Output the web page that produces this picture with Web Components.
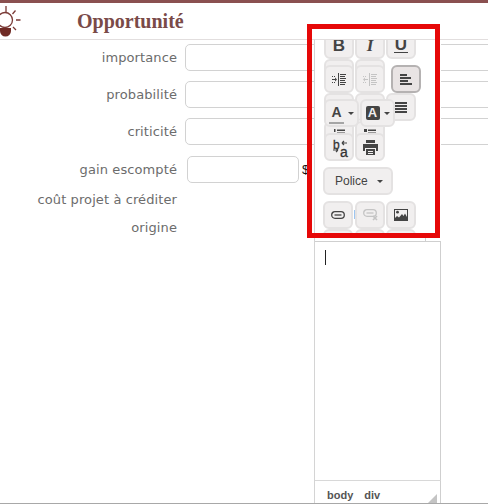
<!DOCTYPE html>
<html><head><meta charset="utf-8"><style>
html,body{margin:0;padding:0;background:#fff;overflow:hidden}
body{width:488px;height:504px;position:relative;font-family:"DejaVu Sans",sans-serif}
</style></head><body>
<form-page></form-page>
<script>
const ICONS={
 indent:'<svg width="14" height="13" viewBox="0 0 14 13"><path fill="currentColor" d="M6 0h1v13H6zM8 1h6v1H8zM8 3h5v1H8zM8 5h6v1H8zM8 7h5v1H8zM8 9h6v1H8zM8 11h5v1H8zM0 6h3V4.500l2 2-2 2V7H0zM0 3h1v1H0zM2 3h1v1H2zM0 9h1v1H0zM2 9h1v1H2z"/></svg>',
 outdent:'<svg width="14" height="13" viewBox="0 0 14 13"><path fill="currentColor" d="M6 0h1v13H6zM8 1h6v1H8zM8 3h5v1H8zM8 5h6v1H8zM8 7h5v1H8zM8 9h6v1H8zM8 11h5v1H8zM5 6H2V4.500l-2 2 2 2V7h3zM0 3h1v1H0zM2 3h1v1H2zM0 9h1v1H0zM2 9h1v1H2z"/></svg>',
 left:'<svg width="12" height="11" viewBox="0 0 12 11"><path fill="currentColor" d="M0 0h7v2H0zM0 3h11v2H0zM0 6h8v2H0zM0 9h12v2H0z"/></svg>',
 just:'<svg width="12" height="11" viewBox="0 0 12 11"><path fill="currentColor" d="M0 0h12v2H0zM0 3h12v2H0zM0 6h12v2H0zM0 9h12v2H0z"/></svg>',
 ul:'<svg width="12" height="12" viewBox="0 0 12 12"><path fill="currentColor" d="M0 0h3v3H0zM4 0.500h8v1.500H4zM4 3.500h8v1.500H4z"/></svg>',
 ol:'<svg width="12" height="12" viewBox="0 0 12 12"><path fill="currentColor" d="M1 0h1.500v3H1zM4 0.500h8v1.500H4zM4 3.500h8v1.500H4z"/></svg>',
 print:'<svg width="15" height="15" viewBox="0 0 15 15"><path fill="currentColor" fill-rule="evenodd" d="M3 0h9v3H3zM0 4h15v7h-2V8H2v3H0zM3 9h9v6H3zM5 11v1h5v-1zM5 13v1h5v-1z"/></svg>',
 link:'<svg width="14" height="8" viewBox="0 0 14 8"><g fill="none" stroke="currentColor" stroke-width="1.300"><rect x=".7" y=".7" width="12.600" height="6.600" rx="3.300"/><path d="M3.500 4h7"/></g></svg>',
 unlink:'<svg width="15" height="12" viewBox="0 0 15 12"><g fill="none" stroke="currentColor" stroke-width="1.300"><rect x=".7" y=".7" width="12.600" height="6.600" rx="3.300"/><path d="M3.500 4h7"/><path stroke-width="1.600" d="M10 7l4 4M14 7l-4 4"/></g></svg>',
 image:'<svg width="14" height="12" viewBox="0 0 14 12"><path fill="currentColor" fill-rule="evenodd" d="M0 0h14v12H0zM1 1v10h12V1z"/><circle cx="3.500" cy="3.200" r="1.400" fill="currentColor"/><path fill="currentColor" d="M1 11V9l2-2 2 1.500L8 5l1.500 2L11 4.500 13 8v3z"/></svg>'
};
customElements.define('tb-btn',class extends HTMLElement{
 connectedCallback(){
  const s=this.shadowRoot||this.attachShadow({mode:'open'});
  const ic=this.getAttribute('icon');
  s.innerHTML=`<style>
  :host{display:flex;align-items:center;justify-content:center;box-sizing:border-box;width:30px;height:28px;flex:none;
   background:#f1efef;border:2px solid #e4e2e2;border-radius:6px;color:#444;position:relative}
  :host([w="34"]){width:35px}
  :host([w="70"]){width:70px;justify-content:flex-start;padding-left:10px}
  :host([active]){background:#e9e4e4;border-color:#b5b2b2;width:30px}
  :host([off]){color:#c4c4c4}
  :host([dy="top"]){align-items:flex-start;padding-top:6px}
  :host([dy="bot"]){align-items:flex-end;padding-bottom:3px}
  slot{display:contents}
  </style>${ic?ICONS[ic]:''}<slot></slot>`;
 }
});
customElements.define('tool-bar',class extends HTMLElement{
 constructor(){super();const s=this.attachShadow({mode:'open'});s.innerHTML=`<style>
 :host{display:block;height:198px;overflow:hidden;background:#fff;box-sizing:border-box}
 .w{display:flex;flex-direction:column;margin-top:-9px;padding-left:9px}
 .r{display:flex;gap:1px;position:relative}
 .top{z-index:2}.mid{z-index:1}
 .gl{font:bold 17px "Liberation Sans",sans-serif;color:#444;line-height:1}
 .car{display:inline-block;width:0;height:0;border:3px solid transparent;border-top:3.500px solid #444;border-bottom:0;margin-left:4px}
 .sw{font:12px "Liberation Sans",sans-serif;color:#333;position:absolute;line-height:1;-webkit-text-stroke:.3px #333}
 .ca{font:bold 14px/13px "Liberation Sans",sans-serif;color:#444;border-bottom:2px solid #a5a5a5;padding:0 2px 3px;margin-top:3px}
 .cb{display:flex;align-items:center;justify-content:center;width:14px;height:14px;border-radius:2px;background:#444;color:#f1efef;font:bold 13px/14px "Liberation Sans",sans-serif}
 svg.arr{position:absolute;left:0;top:0}
 </style><div class="w">
 <div class="r"><tb-btn dy="bot"><span class="gl">B</span></tb-btn><tb-btn dy="bot"><span class="gl" style="font:italic bold 17px/17px 'Liberation Serif',serif">I</span></tb-btn><tb-btn dy="bot"><span class="gl" style="border-bottom:1px solid #444;padding:0 1px;margin-bottom:1px;line-height:15px;height:15px">U</span></tb-btn></div>
 <div class="r"><tb-btn></tb-btn><tb-btn></tb-btn></div>
 <div class="r mid" style="margin-top:-22px"><tb-btn icon="indent"></tb-btn><tb-btn icon="outdent" off></tb-btn><tb-btn icon="left" active style="margin-left:5px"></tb-btn></div>
 <div class="r"><tb-btn></tb-btn><tb-btn></tb-btn><tb-btn icon="just"></tb-btn></div>
 <div class="r top" style="margin-top:-22px"><tb-btn w="34"><span class="ca">A</span><span class="car" style="margin-left:4px"></span></tb-btn><tb-btn w="34"><span class="cb">A</span><span class="car"></span></tb-btn></div>
 <div class="r" style="margin-top:-6px"><tb-btn icon="ol" dy="top"></tb-btn><tb-btn icon="ul" dy="top"></tb-btn></div>
 <div class="r mid" style="margin-top:-16px"><tb-btn><span class="sw" style="left:7px;top:4px">b</span><span class="sw" style="left:14px;top:10px;font-size:14px">a</span><svg class="arr" width="26" height="24" viewBox="0 0 26 24"><path fill="none" stroke="#444" stroke-width="1.200" d="M16 8h5M16 8l2-2M16 8l2 2M7 15h5M12 15l-2-2M12 15l-2 2"/></svg></tb-btn><tb-btn icon="print"></tb-btn></div>
 <div class="r" style="margin-top:6px;margin-left:-1px"><tb-btn w="70"><span style="font:12px 'Liberation Sans',sans-serif;color:#444">Police</span><span class="car" style="margin-left:9px"></span></tb-btn></div>
 <div class="r" style="margin-top:6px;margin-left:-1px"><tb-btn icon="link"></tb-btn><tb-btn icon="unlink" off style="margin-left:1px"></tb-btn><tb-btn icon="image"></tb-btn><i style="position:absolute;left:31px;top:9px;width:1px;height:9px;background:#9cc5f0"></i></div>
 <div class="r" style="margin-left:-1px"><tb-btn></tb-btn><tb-btn style="margin-left:1px"></tb-btn><tb-btn></tb-btn></div>
 </div>`;}
});
customElements.define('rich-editor',class extends HTMLElement{
 constructor(){super();const s=this.attachShadow({mode:'open'});s.innerHTML=`<style>
 :host{display:flex;flex-direction:column;position:absolute;left:314px;top:39px;width:127px;height:465px;box-sizing:border-box;background:#fff;border-left:1px solid #d4d4d4;border-top:1px solid #e2dede}
 .tick{height:3px;width:110px;border-right:1px solid #cfcfcf;flex:none}
 .ed{height:240px;border-top:1px solid #cfcfcf;border-right:1px solid #cfcfcf;border-bottom:1px solid #d8d8d8;padding:8px 0 0 10px;box-sizing:border-box;flex:none}
 .ed i{display:block;width:1px;height:15px;background:#222}
 .st{flex:1;display:flex;gap:11px;border-right:1px solid #cfcfcf;padding:8px 0 0 12px;font:bold 11px "Liberation Sans",sans-serif;color:#555;position:relative}
 .grip{position:absolute;right:3px;bottom:0;width:0;height:0;border-left:10px solid transparent;border-bottom:10px solid #c4c4c4}
 </style><tool-bar></tool-bar><div class="tick"></div><div class="ed"><i></i></div><div class="st"><span>body</span><span>div</span><b class="grip"></b></div>`;}
});
customElements.define('form-row',class extends HTMLElement{
 constructor(){super();const s=this.attachShadow({mode:'open'});s.innerHTML=`<style>
 :host{display:flex;align-items:center;height:var(--h,27px);margin-top:var(--mt,10px)}
 label{width:177px;text-align:right;flex:none;font-size:13px;color:#6c6c6c;letter-spacing:.1px}
 .f{flex:1;display:flex;align-items:center;margin-left:8px;min-width:0}
 </style><label><slot name="label"></slot></label><div class="f"><slot></slot></div>`;}
});
customElements.define('text-box',class extends HTMLElement{
 constructor(){super();const s=this.attachShadow({mode:'open'});s.innerHTML=`<style>
 :host{display:block;height:27px;box-sizing:border-box;border:1px solid #d2d2d2;border-radius:5px;background:#fff;width:var(--w,320px);flex:none}
 </style>`;}
});
customElements.define('form-page',class extends HTMLElement{
 constructor(){super();const s=this.attachShadow({mode:'open'});s.innerHTML=`<style>
 :host{display:block;width:488px;height:504px;position:relative;overflow:hidden;box-sizing:border-box;border-bottom:1px solid #a8a8a8}
 .bar{height:3px;background:#8a5050}
 header{height:37px;box-sizing:border-box;border-bottom:1px solid #e2dede;display:flex;align-items:center;position:relative}
 h1{margin:0 0 0 77px;font:bold 20px "Liberation Serif",serif;color:#7a4a48}
 svg.bulb{position:absolute;left:0;top:-3px}
 .rows{padding-top:4px;--mt:10px}
 .frame{position:absolute;left:307px;top:24px;width:133px;height:214px;box-sizing:border-box;border:5px solid #e60808;z-index:5}
 .dollar{margin-left:3px;font:13px "Liberation Sans",sans-serif;color:#111}
 </style>
 <div class="bar"></div>
 <header><svg class="bulb" width="22" height="38" viewBox="0 0 22 38"><g fill="none" stroke="#7a3a36" stroke-width="1.300"><circle cx="5" cy="20" r="7.500"/><path d="M6 6v6M15.500 10.500l-3 3.500M16 20h4.500M13 27l3 3"/></g><path fill="#6f2a24" d="M0 28h11v3a5.500 5.500 0 0 1-11 0z"/></svg><h1>Opportunité</h1></header>
 <div class="rows">
 <form-row style="--mt:0"><span slot="label">importance</span><text-box></text-box></form-row>
 <form-row><span slot="label">probabilité</span><text-box></text-box></form-row>
 <form-row><span slot="label">criticité</span><text-box></text-box></form-row>
 <form-row style="--mt:11px"><span slot="label">gain escompté</span><text-box style="--w:112px;margin-left:2px"></text-box><span class="dollar">$</span></form-row>
 <form-row style="--h:20px;--mt:6px"><span slot="label">coût projet à créditer</span></form-row>
 <form-row style="--h:20px;--mt:8px"><span slot="label">origine</span></form-row>
 </div>
 <rich-editor></rich-editor>
 <div class="frame"></div>`;}
});
</script></body></html>
